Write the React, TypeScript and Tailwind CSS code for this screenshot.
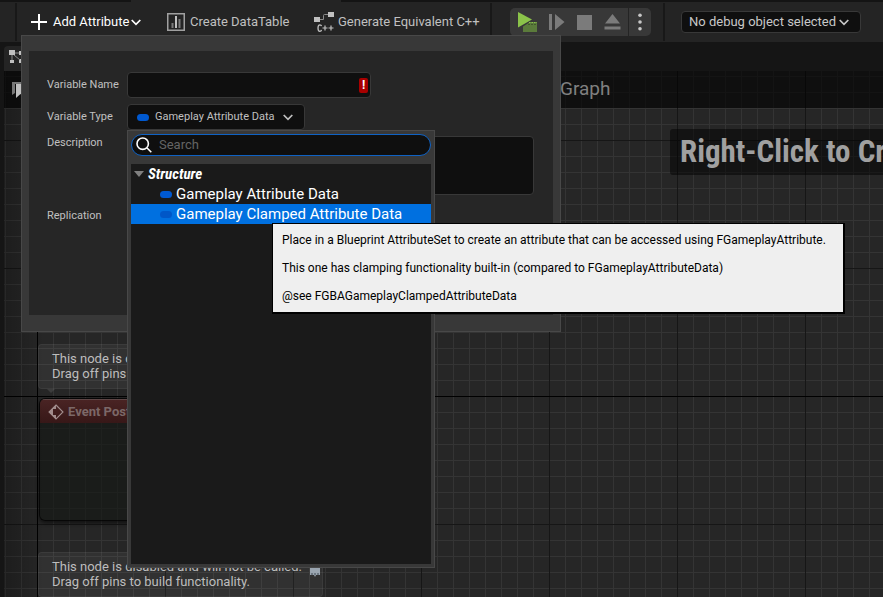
import type { ReactNode } from 'react';

function Chevron({ className = '' }: { className?: string }) {
  return (
    <svg className={className} width="10" height="7" viewBox="0 0 10 7" fill="none" stroke="currentColor" strokeWidth="1.7" aria-hidden="true">
      <path d="M0.7 1 L5 5.4 L9.3 1" />
    </svg>
  );
}

function Separator() {
  return <div className="h-[38px] w-0.5 shrink-0 bg-[#181818]" />;
}

function Pill({ dim = false }: { dim?: boolean }) {
  return <span className={dim ? 'h-[7px] w-3 shrink-0 rounded-full bg-[#0057c8]' : 'h-[7px] w-3 shrink-0 rounded-full bg-[#0059d1]'} />;
}

function Toolbar() {
  return (
    <header className="relative flex h-[42px] shrink-0 items-center bg-[#242424] pt-0.5 pl-[15px] text-[13px] text-[#c0c0c0]">
      <div className="absolute top-0 left-0 h-0.5 w-[131px] bg-[#141414]" />
      <div className="absolute top-0 right-0 left-[341px] h-0.5 bg-[#141414]" />
      <Separator />
      <button className="ml-3.5 flex w-[136px] shrink-0 items-center gap-1.5 text-white">
        <svg width="16" height="16" viewBox="0 0 16 16" stroke="currentColor" strokeWidth="2" aria-hidden="true">
          <path d="M8 0V16M0 8H16" />
        </svg>
        <span className="whitespace-nowrap">Add Attribute</span>
        <Chevron className="-ml-1" />
      </button>
      <button className="flex w-[147px] shrink-0 items-center gap-[5px]">
        <svg width="18" height="18" viewBox="0 0 18 18" fill="none" aria-hidden="true">
          <rect x="0.75" y="0.75" width="16.5" height="16.5" stroke="#a0a0a0" strokeWidth="1.5" />
          <path d="M5.5 10V15" stroke="#7a7a7a" strokeWidth="2" />
          <path d="M9 3V15" stroke="#c0c0c0" strokeWidth="2" />
          <path d="M12.5 6V15" stroke="#7a7a7a" strokeWidth="2" />
        </svg>
        <span className="whitespace-nowrap">Create DataTable</span>
      </button>
      <button className="flex w-[176px] shrink-0 items-center gap-1">
        <svg className="shrink-0" width="20" height="20" viewBox="0 0 20 20" fill="none" aria-hidden="true">
          <rect x="0" y="5" width="6" height="5" fill="#c0c0c0" />
          <rect x="14" y="0" width="6" height="5" fill="#c0c0c0" />
          <path d="M6 7.5H9.5V3.5Q9.5 2.5 10.5 2.5H14" stroke="#8a8a8a" />
          <path d="M7.5 14.2Q7.3 12.8 5.8 12.8Q4 12.8 4 16Q4 19.3 5.8 19.3Q7.3 19.3 7.5 17.9" stroke="#c0c0c0" strokeWidth="1.3" />
          <path d="M8.5 16H13.5M11 13.5V18.5M14.5 16H19.5M17 13.5V18.5" stroke="#c0c0c0" strokeWidth="1.2" />
        </svg>
        <span className="whitespace-nowrap">Generate Equivalent C++</span>
      </button>
      <Separator />
      <div className="ml-[18px] flex h-7 w-[141px] shrink-0 items-center rounded-[5px] bg-[#383838]">
        <button aria-label="Play" className="ml-[7px]">
          <svg width="21" height="20" viewBox="0 0 21 20" aria-hidden="true">
            <path d="M1 0L15 7.5L1 15.5Z" fill="#8bc34a" />
            <path d="M6 14.5L13 10H20V20H6Z" fill="#5b7b3b" />
            <path d="M12 10.5H20" stroke="#8bc34a" strokeDasharray="1.5 1" />
            <path d="M11 12.5H20" stroke="#42592c" strokeDasharray="2 1" />
          </svg>
        </button>
        <button aria-label="Skip frame" className="ml-[11px]">
          <svg width="16" height="16" viewBox="0 0 16 16" fill="#7b7b7b" aria-hidden="true">
            <path d="M0 0H3V16H0ZM6 0L15.5 8L6 16Z" />
          </svg>
        </button>
        <button aria-label="Stop" className="ml-3 size-[15px] bg-[#7b7b7b]" />
        <button aria-label="Eject" className="ml-3">
          <svg width="17" height="16" viewBox="0 0 17 16" fill="#7b7b7b" aria-hidden="true">
            <path d="M8.5 0L16 9.5H1ZM0.5 12.5H16.5V15.5H0.5Z" />
          </svg>
        </button>
        <button aria-label="Play options" className="ml-[7px] flex h-7 w-[23px] items-center justify-center border-l border-[#242424]">
          <svg width="4" height="18" viewBox="0 0 4 18" fill="#c8c8c8" aria-hidden="true">
            <circle cx="2" cy="2.3" r="1.8" />
            <circle cx="2" cy="9" r="1.8" />
            <circle cx="2" cy="15.7" r="1.8" />
          </svg>
        </button>
      </div>
      <div className="ml-3">
        <Separator />
      </div>
      <div className="relative ml-4 flex w-[180px] shrink-0 items-center">
        <select aria-label="Debug object" className="h-[22px] w-full appearance-none rounded-[4px] border border-[#383838] bg-[#0f0f0f] pl-[7px] text-[13px] text-[#c8c8c8]">
          <option>No debug object selected</option>
        </select>
        <Chevron className="pointer-events-none absolute right-3 text-[#c8c8c8]" />
      </div>
    </header>
  );
}

function Bubble({ className, children }: { className: string; children?: ReactNode }) {
  return (
    <div className={`absolute left-[34px] h-[45px] w-[285px] rounded-[4px] border border-white/5 bg-white/5 pt-[6px] pl-[13px] text-[13px] leading-[15px] text-[#bdbdbd] ${className}`}>
      <p>This node is disabled and will not be called.</p>
      <p>Drag off pins to build functionality.</p>
      {children}
    </div>
  );
}

function GraphCanvas() {
  return (
    <main className="relative ml-1 flex-1 overflow-hidden bg-[#262626]">
      <div className="absolute inset-0 bg-[linear-gradient(to_right,#343434_1px,transparent_1px),linear-gradient(to_bottom,#343434_1px,transparent_1px)] bg-[size:16px_16px] bg-[position:1px_5px]" />
      <div className="absolute inset-0 bg-[linear-gradient(to_right,#161616_1px,transparent_1px),linear-gradient(to_bottom,#161616_1px,transparent_1px)] bg-[size:128px_128px] bg-[position:33px_69px]" />
      <div className="absolute inset-y-0 left-[33px] w-px bg-black" />
      <div className="absolute inset-x-0 top-[325px] h-px bg-black" />
      <div className="absolute inset-y-0 left-0 w-10 bg-linear-to-r from-black/25 to-transparent" />

      <div className="relative flex h-[37px] items-center bg-black/60">
        <svg className="ml-2" width="14" height="18" viewBox="0 0 14 18" aria-hidden="true">
          <path d="M0 1H9V3H3V12L0 14Z" fill="#777" />
          <path d="M4 3H13V17L8.500 13L4 17Z" fill="#c0c0c0" />
        </svg>
        <h1 className="absolute left-[556px] text-[19px] text-[#808080]">Graph</h1>
      </div>

      <div className="absolute top-[58px] left-[666px] rounded-[3px] bg-black/50 px-2.5 [font-family:'Roboto_Condensed','Liberation_Sans_Narrow',Roboto,sans-serif] text-[31px] leading-[46px] font-bold whitespace-nowrap text-[#a0a0a0]">
        Right-Click to Create New Nodes
      </div>

      <Bubble className="top-[273px]">
        <span className="absolute top-[44px] left-2 size-0 border-x-4 border-t-4 border-x-transparent border-t-white/10" />
      </Bubble>
      <section className="absolute top-[327px] left-[35px] h-[123px] w-[270px] overflow-hidden rounded-[6px] border border-black/70 bg-[#121612]/60 shadow-[0_2px_4px_rgba(0,0,0,0.6)]">
        <h2 className="flex h-6 items-center gap-1 border-t border-white/20 bg-linear-to-b from-[#4e2424]/90 to-[#3a1717]/90 pl-2 text-[13px] font-bold text-[#7c6868]">
          <svg width="16" height="16" viewBox="0 0 16 16" fill="none" stroke="#a08c8c" strokeWidth="1.1" aria-hidden="true">
            <path d="M8 1L15 8L8 15L1 8Z" />
            <path d="M8 1L1 8L8 15V11H5V5H8Z" fill="#a08c8c" stroke="none" />
          </svg>
          Event PostGameplayEffectExecute
        </h2>
      </section>
      <Bubble className="top-[481px]">
        <svg className="absolute top-[15px] right-0.5" width="10" height="10" viewBox="0 0 10 10" aria-hidden="true">
          <path d="M0 0H10V7H6L5 9L4 7H0Z" fill="#9aa5b0" />
          <path d="M2 5V7M5 5V7M8 5V7" stroke="#3c4650" />
        </svg>
      </Bubble>
    </main>
  );
}

function TypePicker() {
  return (
    <div className="absolute top-full left-0 w-[308px] border border-[#484848] bg-[#383838] p-[3px]">
      <div className="relative flex items-center">
        <svg className="absolute left-[5px] text-white" width="16" height="16" viewBox="0 0 16 16" fill="none" stroke="currentColor" strokeWidth="1.6" aria-hidden="true">
          <circle cx="6.7" cy="6.700" r="5.7" />
          <path d="M10.800 10.800L15.300 15.300" />
        </svg>
        <input aria-label="Search types" placeholder="Search" className="h-[22px] w-full rounded-full border border-[#0f62c4] bg-[#0f0f0f] pb-0.5 pl-[27px] text-[13px] text-white outline-none placeholder:text-[#646464]" />
      </div>
      <div className="relative mt-2 h-[400px] bg-[#1a1a1a] text-[15px] leading-5 text-white">
        <div className="flex h-5 items-center gap-1 pl-[3px] [font-family:'Roboto_Condensed','Liberation_Sans_Narrow',Roboto,sans-serif] text-[15px] font-bold italic">
          <svg width="10" height="6" viewBox="0 0 10 6" fill="#808080" aria-hidden="true">
            <path d="M0 0H10L5 6Z" />
          </svg>
          Structure
        </div>
        <button className="flex h-5 w-full items-center gap-1 pl-[29px]">
          <Pill />
          Gameplay Attribute Data
        </button>
        <button className="flex h-5 w-full items-center gap-1 bg-[#0070e0] pl-[29px]">
          <Pill dim />
          Gameplay Clamped Attribute Data
        </button>
        <div role="tooltip" className="absolute top-[59px] left-[141px] flex w-[573px] flex-col gap-3.5 border-t border-r-2 border-b-2 border-l border-black bg-[#efefef] px-[9px] py-[9px] text-[12px] leading-[14px] whitespace-nowrap text-black">
          <p>Place in a Blueprint AttributeSet to create an attribute that can be accessed using FGameplayAttribute.</p>
          <p>This one has clamping functionality built-in (compared to FGameplayAttributeData)</p>
          <p>@see FGBAGameplayClampedAttributeData</p>
        </div>
      </div>
    </div>
  );
}

function AddAttributeDialog() {
  return (
    <div role="dialog" aria-label="Add Attribute" className="absolute top-[35px] left-[21px] w-[540px] border border-[#484848] bg-[#383838] px-[7px] pt-[15px] pb-4">
      <form className="grid h-[264px] grid-cols-[80px_1fr] content-start gap-y-1.5 bg-[#262626] pt-[21px] pr-[19px] pl-[18px] text-[11px] text-[#c0c0c0]">
        <label htmlFor="name" className="self-center pt-px whitespace-nowrap">Variable Name</label>
        <div className="relative flex w-[244px] items-center">
          <input id="name" className="h-[26px] w-full rounded-[4px] border border-[#383838] bg-[#0f0f0f] px-2 outline-none" />
          <span className="absolute right-[3px] flex h-[15px] w-[9px] items-center justify-center rounded-[2px] bg-[#a80000] text-[12px] font-bold text-white">!</span>
        </div>
        <label htmlFor="type" className="self-center pt-px whitespace-nowrap">Variable Type</label>
        <div className="relative z-10 w-[178px]">
          <button id="type" type="button" className="flex h-[26px] w-full items-center gap-1.5 rounded-[4px] border border-[#383838] bg-[#0f0f0f] pl-[9px] whitespace-nowrap">
            <Pill />
            Gameplay Attribute Data
            <Chevron className="ml-0.5" />
          </button>
          <TypePicker />
        </div>
        <label htmlFor="description" className="leading-[13px]">Description</label>
        <textarea id="description" className="block h-[59px] w-full resize-none rounded-[4px] border border-[#383838] bg-[#0f0f0f] outline-none" />
        <span className="mt-2 leading-[13px]">Replication</span>
      </form>
    </div>
  );
}

export default function App() {
  return (
    <div className="relative flex h-screen flex-col overflow-hidden bg-[#151515] [font-family:Roboto,sans-serif]">
      <Toolbar />
      <nav className="flex h-[29px] shrink-0 items-end pl-1">
        <div className="flex h-[25px] w-40 items-center rounded-t-[4px] bg-[#242424] pb-1 pl-[5px]">
          <svg width="14" height="14" viewBox="0 0 14 14" fill="#c0c0c0" aria-hidden="true">
            <path d="M0 0H6V5H0ZM1 10H5V13H1ZM10 9H14V13H10ZM10 1H14V5H10Z" />
            <path d="M3 5V10M6 3H10M5 5L11 10" stroke="#8a8a8a" />
          </svg>
        </div>
      </nav>
      <GraphCanvas />
      <AddAttributeDialog />
    </div>
  );
}
